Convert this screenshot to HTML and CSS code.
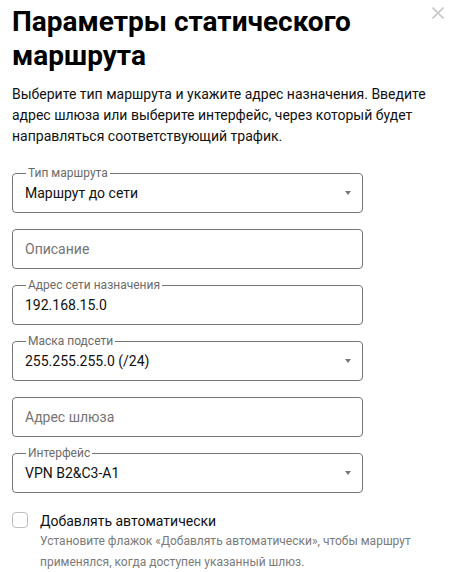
FILE: index.html
```html
<!DOCTYPE html>
<html lang="ru">
<head>
<meta charset="utf-8">
<title>Параметры статического маршрута</title>
<link rel="stylesheet" href="styles.css">
</head>
<body>
<div class="dialog">
  <button class="close" aria-label="Закрыть">
    <svg width="12" height="12" viewBox="0 0 12 12"><path d="M0.5 0.5L11.5 11.5M11.5 0.5L0.5 11.5" stroke="#c8c8c8" stroke-width="1.6" fill="none"/></svg>
  </button>
  <h1 class="title">Параметры статического маршрута</h1>
  <p class="desc">Выберите тип маршрута и укажите адрес назначения. Введите адрес шлюза или выберите интерфейс, через который будет направляться соответствующий трафик.</p>
  <div class="fields">
    <div class="field">
      <span class="label">Тип маршрута</span>
      <span class="value">Маршрут до сети</span>
      <span class="arrow"></span>
    </div>
    <div class="field">
      <span class="placeholder">Описание</span>
    </div>
    <div class="field">
      <span class="label">Адрес сети назначения</span>
      <span class="value">192.168.15.0</span>
    </div>
    <div class="field">
      <span class="label">Маска подсети</span>
      <span class="value">255.255.255.0 (/24)</span>
      <span class="arrow"></span>
    </div>
    <div class="field">
      <span class="placeholder">Адрес шлюза</span>
    </div>
    <div class="field">
      <span class="label">Интерфейс</span>
      <span class="value">VPN B2&amp;C3-A1</span>
      <span class="arrow"></span>
    </div>
  </div>
  <div class="check-row">
    <span class="checkbox"></span>
    <div class="check-text">
      <div class="check-label">Добавлять автоматически</div>
      <div class="check-help">Установите флажок «Добавлять автоматически», чтобы маршрут применялся, когда доступен указанный шлюз.</div>
    </div>
  </div>
</div>
</body>
</html>
```
FILE: styles.css
```css
html, body {
  margin: 0;
  padding: 0;
  background: #fff;
}
body {
  font-family: Roboto, "Liberation Sans", sans-serif;
  color: #111;
}
.dialog {
  position: relative;
  padding: 5px 12px 0 12px;
}
.close {
  position: absolute;
  top: 7px;
  right: 9px;
  width: 12px;
  height: 12px;
  padding: 0;
  border: 0;
  background: none;
  display: block;
}
.close svg {
  display: block;
}
.title {
  margin: 0;
  font-size: 28px;
  line-height: 34px;
  font-weight: 700;
  color: #000;
}
.desc {
  margin: 11px 0 0 0;
  font-size: 14px;
  line-height: 21px;
  color: #111;
}
.fields {
  display: flex;
  flex-direction: column;
  gap: 16px;
  margin-top: 26px;
  width: 351px;
}
.field {
  position: relative;
  box-sizing: border-box;
  height: 40px;
  border: 1px solid #757575;
  border-radius: 4px;
  display: flex;
  align-items: center;
  padding: 0 12px;
  font-size: 14px;
}
.label {
  position: absolute;
  top: -8px;
  left: 13px;
  padding: 0 2px;
  background: #fff;
  font-size: 12px;
  line-height: 14px;
  color: #6b6b6b;
}
.value {
  flex: 1;
  color: #111;
}
.placeholder {
  flex: 1;
  color: #757575;
}
.arrow {
  width: 0;
  height: 0;
  border-left: 3px solid transparent;
  border-right: 3px solid transparent;
  border-top: 4px solid #777;
  margin-right: -1px;
}
.check-row {
  display: flex;
  gap: 12px;
  margin-top: 18px;
}
.checkbox {
  box-sizing: border-box;
  width: 16px;
  height: 16px;
  border: 1px solid #bdbdbd;
  border-radius: 4px;
  margin-top: 1px;
  flex: none;
}
.check-label {
  font-size: 14px;
  line-height: 20px;
  color: #111;
}
.check-help {
  font-size: 12px;
  line-height: 21px;
  color: #7a7a7a;
}
```
